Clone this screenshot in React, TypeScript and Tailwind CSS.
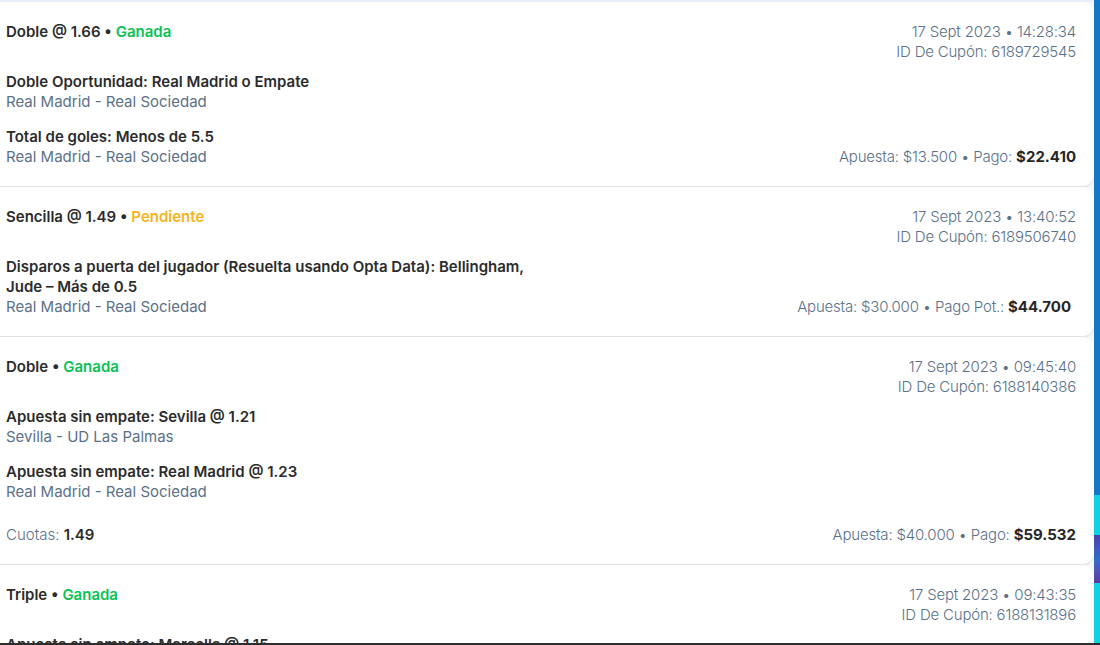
import React from "react";

type Selection = { market: string; event: string };
type Bet = {
  kind: string;
  status: "Ganada" | "Pendiente";
  date: string;
  coupon: string;
  selections: Selection[];
  odds?: string;
  stake: string;
  payLabel: string;
  pay: string;
};

const bets: Bet[] = [
  {
    kind: "Doble @ 1.66",
    status: "Ganada",
    date: "17 Sept 2023 • 14:28:34",
    coupon: "6189729545",
    selections: [
      { market: "Doble Oportunidad: Real Madrid o Empate", event: "Real Madrid - Real Sociedad" },
      { market: "Total de goles: Menos de 5.5", event: "Real Madrid - Real Sociedad" },
    ],
    stake: "$13.500",
    payLabel: "Pago:",
    pay: "$22.410",
  },
  {
    kind: "Sencilla @ 1.49",
    status: "Pendiente",
    date: "17 Sept 2023 • 13:40:52",
    coupon: "6189506740",
    selections: [
      {
        market: "Disparos a puerta del jugador (Resuelta usando Opta Data): Bellingham, Jude – Más de 0.5",
        event: "Real Madrid - Real Sociedad",
      },
    ],
    stake: "$30.000",
    payLabel: "Pago Pot.:",
    pay: "$44.700",
  },
  {
    kind: "Doble",
    status: "Ganada",
    date: "17 Sept 2023 • 09:45:40",
    coupon: "6188140386",
    selections: [
      { market: "Apuesta sin empate: Sevilla @ 1.21", event: "Sevilla - UD Las Palmas" },
      { market: "Apuesta sin empate: Real Madrid @ 1.23", event: "Real Madrid - Real Sociedad" },
    ],
    odds: "1.49",
    stake: "$40.000",
    payLabel: "Pago:",
    pay: "$59.532",
  },
  {
    kind: "Triple",
    status: "Ganada",
    date: "17 Sept 2023 • 09:43:35",
    coupon: "6188131896",
    selections: [
      { market: "Apuesta sin empate: Marsella @ 1.15", event: "Marsella - Niza" },
      { market: "Apuesta sin empate: Real Madrid @ 1.23", event: "Real Madrid - Real Sociedad" },
    ],
    stake: "$20.000",
    payLabel: "Pago:",
    pay: "$31.000",
  },
];

function Footer({ bet }: { bet: Bet }) {
  return (
    <div className="whitespace-nowrap font-light tracking-[-0.2px] text-[#5b7189]">
      Apuesta: {bet.stake} • {bet.payLabel}{" "}
      <span className="font-bold tracking-normal text-[#262626]">{bet.pay}</span>
    </div>
  );
}

function BetCard({ bet }: { bet: Bet }) {
  const last = bet.selections.length - 1;
  return (
    <div className="shrink-0 rounded-r-[12px] border-b border-[#e2e4e7] bg-white pt-5 pb-[19px] pl-[6px] pr-[18px] shadow-[0_1px_2px_rgba(0,0,0,0.08)]">
      <div className="flex items-start justify-between">
        <div className="font-semibold text-[#2b2b2b]">
          {bet.kind} •{" "}
          <span className={bet.status === "Ganada" ? "font-semibold text-[#0ac254]" : "font-semibold text-[#f8b420]"}>
            {bet.status}
          </span>
        </div>
        <div className="text-right font-light tracking-[-0.2px] text-[#5b7189]">
          <div>{bet.date}</div>
          <div>ID De Cupón: {bet.coupon}</div>
        </div>
      </div>
      <div className="mt-[10px] flex flex-col gap-[15px]">
        {bet.selections.map((s, i) => (
          <div key={i} className="flex items-end justify-between gap-8">
            <div className="max-w-[545px]">
              <div className="font-semibold text-[#2b2b2b]">{s.market}</div>
              <div className="text-[#5b7189]">{s.event}</div>
            </div>
            {i === last && !bet.odds && (
              <div className={bet.payLabel === "Pago Pot.:" ? "pr-[5px]" : ""}>
                <Footer bet={bet} />
              </div>
            )}
          </div>
        ))}
      </div>
      {bet.odds && (
        <div className="mt-[23px] flex items-end justify-between">
          <div className="font-light text-[#5b7189]">
            Cuotas: <span className="font-semibold text-[#2b2b2b]">{bet.odds}</span>
          </div>
          <Footer bet={bet} />
        </div>
      )}
    </div>
  );
}

export default function App() {
  return (
    <div
      className="flex h-[645px] w-[1100px] flex-col overflow-hidden bg-[#1778c2] text-[15px] leading-5"
      style={{ fontFamily: "Inter, 'Noto Sans', sans-serif" }}
    >
      <div className="flex min-h-0 flex-1">
        <div className="flex min-w-0 flex-1 flex-col overflow-hidden bg-[#f6f8fa]">
          <div className="h-[2px] shrink-0 bg-[#e8f1fa]" />
          {bets.map((b, i) => (
            <BetCard key={i} bet={b} />
          ))}
        </div>
        <div className="flex w-[6px] shrink-0 flex-col">
          <div className="h-[495px] bg-[#1778c2]" />
          <div className="h-[40px] bg-[#12d2e0]" />
          <div className="h-[48px] bg-gradient-to-b from-[#4a3fa8] via-[#2f6fc4] to-[#5a3aa0]" />
          <div className="flex-1 bg-[#12d2e0]" />
        </div>
      </div>
      <div className="h-[2px] shrink-0 bg-[#2e2e2e]" />
    </div>
  );
}
